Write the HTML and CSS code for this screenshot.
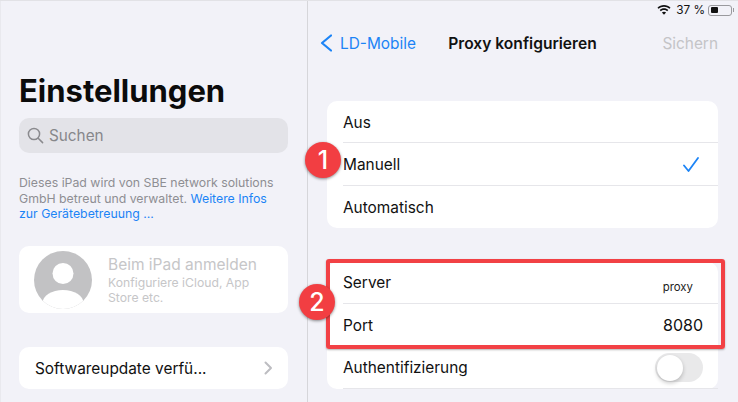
FILE: index.html
```html
<!DOCTYPE html>
<html lang="de">
<head>
<meta charset="utf-8">
<title>Proxy konfigurieren</title>
<link rel="stylesheet" href="styles.css">
</head>
<body>
<div class="app">
  <aside class="sidebar">
    <h1 class="title">Einstellungen</h1>
    <div class="search">
      <svg class="search-icon" width="17" height="17" viewBox="0 0 17 17" fill="none" stroke="#8a8a8e" stroke-width="1.5" stroke-linecap="round"><circle cx="7" cy="7" r="5.6"/><path d="M11.2 11.2 15.6 15.6"/></svg>
      <span>Suchen</span>
    </div>
    <p class="note">Dieses iPad wird von SBE network solutions GmbH betreut und verwaltet. <a class="link">Weitere Infos<br>zur Gerätebetreuung ...</a></p>
    <div class="account">
      <svg class="avatar" width="58" height="58" viewBox="0 0 58 58"><defs><clipPath id="av"><circle cx="29" cy="29" r="29"/></clipPath></defs><circle cx="29" cy="29" r="29" fill="#c2c2c4"/><g clip-path="url(#av)" fill="#fff"><circle cx="29" cy="22.5" r="10.5"/><ellipse cx="29" cy="52" rx="20.5" ry="13"/></g></svg>
      <div class="account-text">
        <div class="account-name">Beim iPad anmelden</div>
        <div class="account-sub">Konfiguriere iCloud, App Store etc.</div>
      </div>
    </div>
    <div class="update">
      <span>Softwareupdate verfü...</span>
      <svg width="9" height="14" viewBox="0 0 9 14" fill="none" stroke="#bdbdc1" stroke-width="2" stroke-linecap="round" stroke-linejoin="round"><path d="M1.5 1.5 7 7 1.5 12.500"/></svg>
    </div>
  </aside>
  <main class="detail">
    <div class="status">
      <svg width="14" height="10" viewBox="0 0 15 11" fill="#111"><path d="M7.500 0C4.700 0 2.200 1.100.3 2.900l1.200 1.300C3.100 2.700 5.200 1.800 7.500 1.800s4.400.9 6 2.400l1.200-1.300C12.800 1.100 10.300 0 7.500 0Z"/><path d="M7.500 3.700c-1.800 0-3.500.7-4.700 1.900L4 6.900c.9-.9 2.200-1.400 3.500-1.400s2.600.5 3.500 1.400l1.200-1.300c-1.200-1.200-2.900-1.900-4.700-1.900Z"/><path d="M7.500 7.300c-.9 0-1.700.3-2.300.9l2.300 2.500 2.300-2.500c-.6-.6-1.400-.9-2.300-.9Z"/></svg>
      <span class="pct">37 %</span>
      <span class="battery"><span class="battery-fill"></span></span>
      <span class="battery-tip"></span>
    </div>
    <nav class="nav">
      <div class="back">
        <svg width="12" height="18" viewBox="0 0 12 18" fill="none" stroke="#1c84f6" stroke-width="2.200" stroke-linecap="round" stroke-linejoin="round"><path d="M11 1.500 2 9l9 7.500"/></svg>
        <span>LD-Mobile</span>
      </div>
      <div class="nav-title">Proxy konfigurieren</div>
      <div class="save">Sichern</div>
    </nav>
    <section class="card card-mode">
      <div class="row"><span>Aus</span></div>
      <div class="row"><span>Manuell</span>
        <svg class="check" width="16" height="15" viewBox="0 0 16 15" fill="none" stroke="#1c84f6" stroke-width="1.800" stroke-linecap="round" stroke-linejoin="round"><path d="M1 8.500 5.500 14 15 1"/></svg>
      </div>
      <div class="row"><span>Automatisch</span></div>
    </section>
    <section class="card card-server">
      <div class="row"><span>Server</span><span class="proxy">proxy</span></div>
      <div class="row"><span>Port</span><span class="port">8080</span></div>
      <div class="row"><span>Authentifizierung</span><span class="toggle"><span class="knob"></span></span></div>
      <div class="highlight"></div>
    </section>
  </main>
  <div class="badge badge-one">1</div>
  <div class="badge badge-two">2</div>
</div>
</body>
</html>
```
FILE: styles.css
```css
* { box-sizing: border-box; }
html, body { margin: 0; padding: 0; }
body {
  width: 738px;
  height: 402px;
  overflow: hidden;
  font-family: Inter, "Liberation Sans", sans-serif;
  color: #111;
  background: #f2f2f8;
}
.app {
  position: relative;
  display: flex;
  height: 402px;
  border-top: 1px solid #e2e2e6;
}
.sidebar {
  width: 308px;
  flex: none;
  padding: 0 19px 0 18px;
  border-left: 1px solid #e9e9ee;
  border-right: 1px solid #d6d6da;
  background: #f2f2f8;
}
.title {
  margin: 71px 0 0;
  font-size: 31px;
  line-height: 38px;
  font-weight: 700;
  color: #0b0b0b;
}
.search {
  display: flex;
  align-items: center;
  gap: 5px;
  height: 35px;
  margin-top: 8px;
  padding-left: 8px;
  border-radius: 10px;
  background: #e3e3e8;
  color: #87878b;
  font-size: 15.300px;
}
.note {
  margin: 22px 0 0;
  font-size: 12.300px;
  line-height: 15.500px;
  color: #8e8e93;
}
.link { color: #1c84f6; }
.account {
  display: flex;
  align-items: center;
  height: 67px;
  margin-top: 24.500px;
  padding-left: 15px;
  border-radius: 10px;
  background: #fff;
}
.avatar { flex: none; }
.account-text { margin-left: 16px; width: 160px; }
.account-name { font-size: 15.500px; line-height: 20px; color: #c6c6c8; }
.account-sub { font-size: 12.200px; line-height: 15px; color: #c6c6c8; }
.update {
  display: flex;
  align-items: center;
  justify-content: space-between;
  height: 42px;
  margin-top: 34px;
  padding: 0 15px 0 16px;
  border-radius: 10px;
  background: #fff;
  font-size: 15.400px;
  color: #111;
}
.detail {
  flex: 1;
  min-width: 0;
  padding: 0 20px 0 19px;
}
.status {
  display: flex;
  align-items: center;
  justify-content: flex-end;
  height: 18px;
  margin-right: -19px;
  font-size: 11.800px;
}
.pct { margin-left: 5px; margin-right: 3px; }
.battery {
  display: block;
  width: 24px;
  height: 11px;
  padding: 1.500px;
  border: 1px solid #9a9a9e;
  border-radius: 3px;
}
.battery-fill { display: block; width: 7px; height: 100%; background: #111; border-radius: 1px; }
.battery-tip { display: block; width: 1px; height: 4px; margin: 0 3px 0 1px; background: #9a9a9e; }
.nav {
  display: grid;
  grid-template-columns: 1fr auto 1fr;
  align-items: center;
  height: 44px;
  margin-top: 2px;
  font-size: 15.400px;
}
.back {
  display: flex;
  align-items: center;
  gap: 8px;
  margin-left: -7px;
  color: #1c84f6;
}
.nav-title { font-size: 15.600px; font-weight: 600; }
.save { justify-self: end; color: #c4c4c7; }
.card {
  position: relative;
  background: #fff;
  border-radius: 10px;
  font-size: 15.400px;
}
.card-mode { margin-top: 36px; }
.card-server { margin-top: 34px; }
.row {
  display: flex;
  align-items: center;
  justify-content: space-between;
  height: 42.300px;
  margin-left: 16px;
  padding-right: 15px;
  box-shadow: inset 0 -1px 0 #e6e6ea;
}
.row:last-of-type { box-shadow: none; }
.card-mode .row:last-child { padding-top: 1px; }
.card-server .row { height: 42px; }
.card-server .row:nth-child(2) { height: 43px; }
.check { margin-right: 4px; }
.proxy { font-size: 11.400px; margin-top: 8px; padding-right: 10px; color: #222; }
.port { font-size: 16px; color: #111; }
.toggle {
  display: block;
  width: 48px;
  height: 29px;
  padding: 1.500px;
  border-radius: 15px;
  background: #e9e9ea;
}
.knob {
  display: block;
  width: 26px;
  height: 26px;
  border-radius: 50%;
  background: #fff;
  box-shadow: 0 2px 4px rgba(0,0,0,.22);
}
.highlight {
  position: absolute;
  left: -1px;
  top: -3px;
  width: 399px;
  height: 90px;
  border: 4px solid #f24145;
  border-radius: 3px;
  box-shadow: 0 1px 2px rgba(0,0,0,.3);
}
.badge {
  position: absolute;
  width: 36px;
  height: 36px;
  border-radius: 50%;
  display: flex;
  align-items: center;
  justify-content: center;
  background: #f23e42;
  color: #fff;
  font-size: 25px;
  font-weight: 500;
  box-shadow: 0 1px 3px rgba(0,0,0,.45);
}
.badge-one { left: 305px; top: 141px; }
.badge-two { left: 299px; top: 283px; }
```
